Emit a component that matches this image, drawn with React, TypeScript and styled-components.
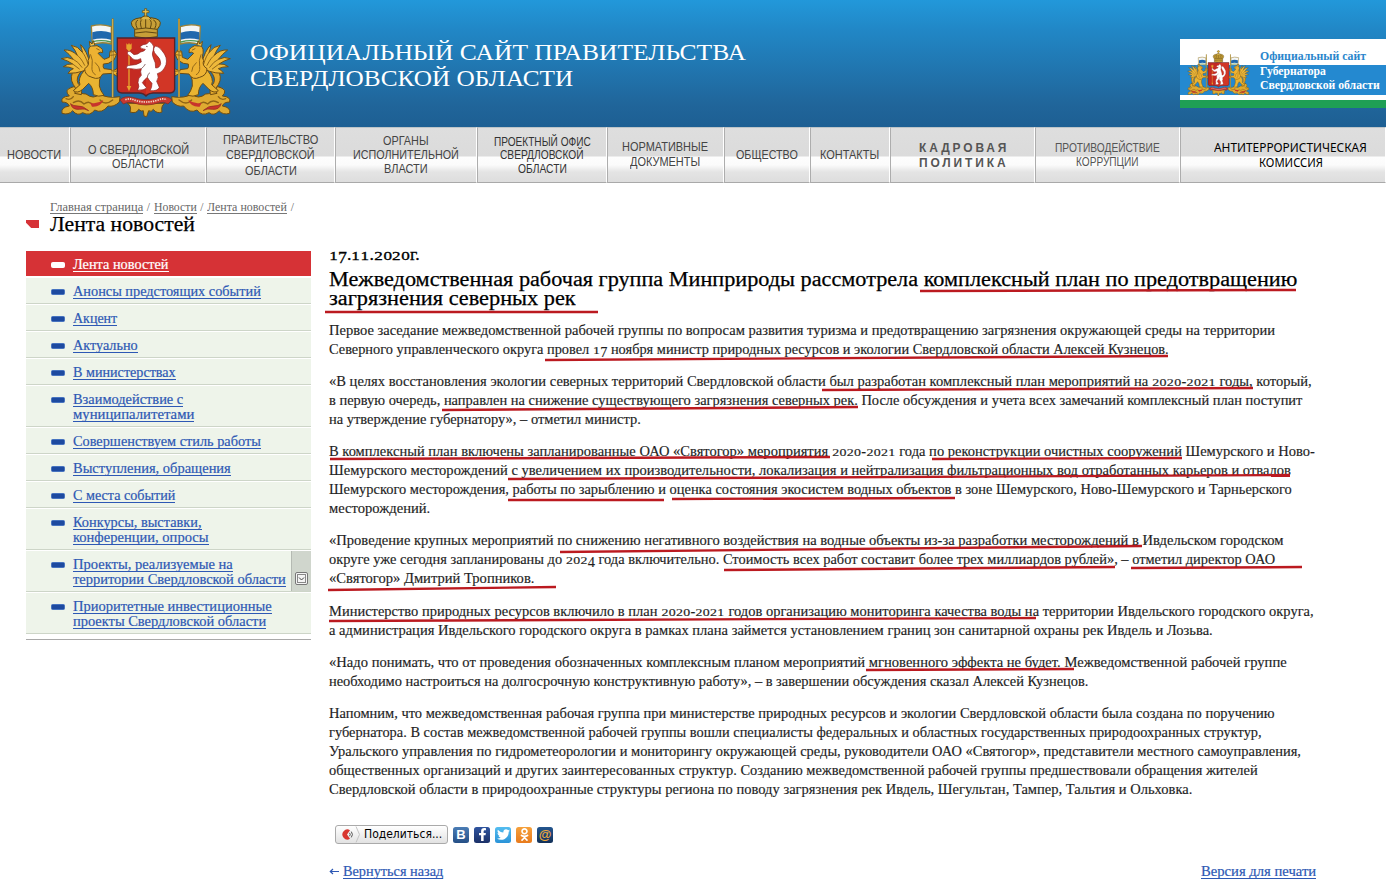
import React, { useLayoutEffect, useRef, useState } from "react";
import styled, { createGlobalStyle } from "styled-components";
import { FaFacebookF, FaTwitter, FaOdnoklassniki } from "react-icons/fa";

const serif = `"Liberation Serif", serif`;
const sans = `"Liberation Sans", sans-serif`;

const Global = createGlobalStyle`
  body { margin: 0; background: #fff; font-family: ${serif}; color: #222; }
  * { box-sizing: border-box; }
`;

/* ---------- text stretched to a measure ---------- */

const FitBox = styled.span<{ $w: number }>`
  display: inline-block;
  width: ${(p) => p.$w}px;
  white-space: nowrap;
  vertical-align: top;
  text-align: left;
`;
const FitInner = styled.span`
  display: inline-block;
  transform-origin: 0 50%;
  vertical-align: top;
`;
const SmallDigit = styled.span`
  font-size: 0.77em;
  line-height: 0;
  display: inline-block;
  transform: scaleX(1.25);
  margin: 0 0.08em;
`;
const LowDigit = styled.span`
  line-height: 0;
  vertical-align: -0.2em;
`;

function oldStyle(text: string) {
  return text.split(/(\d)/).map((c, i) => {
    if (/^[012]$/.test(c)) return <SmallDigit key={i}>{c}</SmallDigit>;
    if (/^[34579]$/.test(c)) return <LowDigit key={i}>{c}</LowDigit>;
    return c;
  });
}

function Fit({ w, children }: { w: number; children: string }) {
  const ref = useRef<HTMLSpanElement>(null);
  const [k, setK] = useState(1);
  useLayoutEffect(() => {
    if (ref.current) setK(w / ref.current.offsetWidth);
  }, [w, children]);
  return (
    <FitBox $w={w}>
      <FitInner ref={ref} style={{ transform: `scaleX(${k})` }}>
        {oldStyle(children)}
      </FitInner>
    </FitBox>
  );
}

/* ---------- header ---------- */

const Header = styled.header`
  height: 127px;
  display: flex;
  justify-content: space-between;
  background: linear-gradient(#2298da 0, #2187c6 30px, #20659a 105px, #1d5f93 127px);
`;
const Brand = styled.div`
  display: flex;
  padding-left: 40px;
`;
const SiteName = styled.h1`
  margin: 0;
  padding-top: 39px;
  margin-left: -10px;
  font-weight: 400;
  font-size: 24px;
  line-height: 26px;
  color: #fff;
  display: flex;
  flex-direction: column;
`;
const Banner = styled.a`
  width: 206px;
  height: 69px;
  margin-top: 39px;
  display: flex;
  padding: 11px 0 0 7px;
  background: linear-gradient(#fff 26px, #2489d0 26px, #2489d0 56px, #fff 56px, #fff 61px, #1f9f55 61px);
`;
const BannerText = styled.div`
  display: flex;
  flex-direction: column;
  padding-left: 10px;
  margin-top: -1px;
  font-weight: 700;
  font-size: 12px;
  line-height: 14.5px;
  color: #fff;
`;
const BannerTop = styled.span`
  color: #2a86cc;
`;

function Griffin() {
  return (
    <g stroke="#6f4d12" strokeWidth="3" strokeLinejoin="round" strokeLinecap="round">
      {/* flag */}
      <path d="M154 78 Q185 70 214 80 L214 132 Q185 124 157 133 Z" fill="#f4f6f6" stroke="#9c8136" strokeWidth="4" />
      <path d="M157 97 Q185 89 213 98 L213 119 Q185 112 157 119 Z" fill="#2068ad" stroke="none" />
      <path d="M158 125 Q185 118 212 126" fill="none" stroke="#479653" strokeWidth="4" />
      {/* acanthus base */}
      <path
        d="M95 262 Q70 270 88 288 Q62 290 66 306 Q84 306 88 318 Q62 322 66 340 Q86 346 98 332 Q112 350 128 338 Q150 350 164 330 Q186 342 204 318 Q222 322 238 306 L240 290 Q200 296 180 282 Q160 300 138 282 Q120 282 112 268 Q110 256 95 262 Z"
        fill="#dfaa31"
      />
      <path d="M100 308 Q118 296 132 312 Q148 300 160 316 M180 300 Q196 318 218 300 M78 296 Q92 302 100 290" fill="none" stroke="#8e6417" strokeWidth="4" />
      <path d="M92 312 Q96 330 118 328 Q134 324 146 332 Q128 316 114 318 Q100 318 92 312 Z" fill="#c8342c" stroke="#8b2a1e" strokeWidth="2" />
      <path d="M150 308 Q170 314 190 300 Q182 322 156 320 Z" fill="#c8342c" stroke="none" />
      {/* hind legs and tail */}
      <path d="M104 204 Q86 232 100 254 Q112 268 104 280 L124 284 Q128 262 114 250 Q106 232 124 214 Z" fill="#e3a82b" />
      <path d="M132 212 Q112 236 120 254 L100 272 Q112 282 128 268 L146 250 Q160 262 160 284 Q176 292 192 286 Q182 274 178 258 Q176 240 184 222 Z" fill="#eab431" />
      {/* wing */}
      <path
        d="M152 196 Q140 150 122 134 Q124 146 128 158 Q114 138 94 136 Q106 150 112 166 Q94 148 72 150 Q88 162 100 178 Q82 168 64 176 Q84 182 98 192 Q82 190 70 200 Q88 200 100 206 Q90 210 84 220 Q110 220 126 214 Q142 212 152 196 Z"
        fill="#eeb93b"
      />
      <path d="M144 192 Q136 166 128 158 M134 196 Q122 172 112 166 M126 202 Q114 184 100 178 M118 207 L98 192" fill="none" stroke="#936819" />
      {/* body and head */}
      <path
        d="M146 148 Q148 136 160 138 Q172 134 180 142 Q190 146 188 158 Q180 154 174 160 Q186 172 192 178 L208 172 L210 154 L222 150 L230 162 L222 180 Q204 194 190 192 Q188 202 192 206 L224 210 L236 202 L232 212 L242 214 L230 220 L234 230 L216 220 L188 222 Q178 242 156 232 Q134 226 134 206 Q150 196 144 182 Q152 172 146 160 Z"
        fill="#edb232"
      />
      <path d="M170 146 L178 150 M152 164 Q160 180 156 200 Q154 218 166 224 M166 188 Q180 200 180 214" fill="none" stroke="#936819" />
      <path d="M150 138 L148 124 L156 132 L160 122 L164 134" fill="#eebf4a" />
      {/* pole */}
      <path d="M218 58 L218 290" stroke="#8a712c" strokeWidth="6" fill="none" />
      <path d="M218 58 L218 290" stroke="#e9c457" strokeWidth="2.5" fill="none" />
      <path d="M212 156 L226 154 M212 166 L228 164 M214 212 L228 214" stroke="#936819" fill="none" />
    </g>
  );
}

function Crest({ width, height, box }: { width: number; height: number; box: string }) {
  return (
    <svg width={width} height={height} viewBox={box} preserveAspectRatio="none">
      <Griffin />
      <g transform="translate(635 0) scale(-1 1)">
        <Griffin />
      </g>
      {/* crown */}
      <g stroke="#5f4711" strokeWidth="3" strokeLinejoin="round">
        <path d="M284 88 Q262 64 288 56 Q304 50 317 56 Q332 50 348 56 Q372 64 352 88 L352 110 Q317 118 284 110 Z" fill="#c7a038" />
        <path d="M292 86 Q282 66 294 60 M304 84 Q298 64 306 58 M317 84 L317 56 M331 84 Q338 64 328 58 M344 86 Q354 66 340 60 M284 88 Q317 80 352 88 M286 99 Q317 92 350 99" fill="none" />
        <path d="M300 58 Q317 36 334 58" fill="#dbb648" />
        <path d="M314 26 H320 V32 H327 V38 H320 V48 H314 V38 H307 V32 H314 Z" fill="#e9c24a" strokeWidth="2" />
      </g>
      {/* shield */}
      <path d="M232 114 H404 V268 Q402 278 390 279 H340 Q324 280 318 288 Q312 280 296 279 H246 Q234 278 232 268 Z" fill="#c42a22" stroke="#54252b" strokeWidth="4" />
      <path d="M318 117 H401 V266 Q400 275 388 276 H338 L318 282 Z" fill="#d23626" />
      {/* arrow */}
      <path d="M267 150 V262" stroke="#e8a32e" strokeWidth="4" />
      <path d="M259 130 L264 134 L267 128 L270 134 L275 130 V146 L267 154 L259 146 Z M267 274 L260 258 H274 Z" fill="#e8a32e" />
      {/* sable */}
      <path
        d="M300 140 Q308 132 320 132 L328 124 L335 129 Q344 138 340 150 Q334 162 340 174 Q348 188 347 204 Q360 204 362 190 Q362 176 350 166 Q334 150 346 138 Q356 138 366 152 Q384 172 378 194 Q370 216 352 221 Q358 232 350 244 L358 262 Q354 274 330 272 Q336 264 336 250 Q326 240 322 232 Q312 240 307 248 L320 264 Q312 272 292 270 Q300 260 294 248 Q294 234 304 226 Q300 214 304 206 Q288 210 274 206 L260 206 Q258 196 270 196 Q290 196 304 186 L302 176 Q282 186 272 170 L262 162 Q260 152 270 154 L282 164 Q294 164 302 156 Q314 154 316 148 Q304 148 300 140 Z"
        fill="#fff"
        stroke="#8c211f"
        strokeWidth="2"
      />
      <path d="M304 206 Q312 200 316 192 M322 232 Q322 222 330 218 M318 139 L323 140" fill="none" stroke="#5b2a2a" strokeWidth="2" />
      {/* ribbon and pendant leaves */}
      <path d="M262 310 Q276 318 270 336 Q290 342 296 328 Q304 336 310 332 L312 348 L320 350 L326 332 Q334 338 340 328 Q350 342 366 336 Q362 318 374 310 Z" fill="#dfaa31" stroke="#6f4d12" strokeWidth="3" />
      <path d="M240 300 Q252 286 278 292 Q318 306 358 292 Q384 286 396 300 L384 312 Q372 304 358 308 Q318 322 278 308 Q264 304 250 312 Z" fill="#c8382f" stroke="#7d2a1e" strokeWidth="2" />
      <path d="M256 299 Q270 294 282 300 Q318 312 354 300 Q368 294 380 299" fill="none" stroke="#f3d9c8" strokeWidth="5" strokeDasharray="4 3" />
    </svg>
  );
}

/* ---------- navigation ---------- */

const Nav = styled.nav`
  display: grid;
  grid-template-columns: 70px 136px 129px 142px 130px 117px 86px 80px 145px 145px 206px;
  height: 56px;
`;
const NavItem = styled.a<{ $lh: number; $top?: number; $left?: number; $color?: string; $bold?: boolean; $first?: boolean; $thin?: boolean }>`
  display: flex;
  flex-direction: column;
  align-items: center;
  justify-content: center;
  border-left: ${(p) => (p.$first ? 0 : 1)}px solid #adadad;
  border-right: 1px solid #fff;
  border-top: 1px solid #bcc4c8;
  border-bottom: 1px solid #a9a9a9;
  padding-top: ${(p) => Math.max(p.$top ?? 0, 0)}px;
  padding-bottom: ${(p) => Math.max(-(p.$top ?? 0), 0)}px;
  padding-left: ${(p) => Math.max(p.$left ?? 0, 0)}px;
  padding-right: ${(p) => Math.max(-(p.$left ?? 0), 0)}px;
  font-family: ${(p) => (p.$thin ? `"Noto Sans", sans-serif` : sans)};
  font-size: ${(p) => (p.$bold || p.$thin ? 12.5 : 13)}px;
  font-weight: ${(p) => (p.$bold ? 700 : 400)};
  letter-spacing: ${(p) => (p.$bold ? 3 : 0)}px;
  line-height: ${(p) => p.$lh}px;
  color: ${(p) => p.$color ?? "#444"};
  background: linear-gradient(#dedede 0, #dbdbdb 28px, #fdfdfd 29px, #fbfbfb 37px, #e4e4e4 44px, #dcdcdc 56px);
`;

type NavDef = {
  lines: [string, number][];
  lh: number;
  top?: number;
  left?: number;
  color?: string;
  bold?: boolean;
  thin?: boolean;
};
const navItems: NavDef[] = [
  { lines: [["НОВОСТИ", 54]], lh: 14, left: -2 },
  { lines: [["О СВЕРДЛОВСКОЙ", 101], ["ОБЛАСТИ", 52]], lh: 14, top: 3 },
  { lines: [["ПРАВИТЕЛЬСТВО", 95], ["СВЕРДЛОВСКОЙ", 89], ["ОБЛАСТИ", 52]], lh: 15.5 },
  { lines: [["ОРГАНЫ", 46], ["ИСПОЛНИТЕЛЬНОЙ", 106], ["ВЛАСТИ", 44]], lh: 14 },
  { lines: [["ПРОЕКТНЫЙ ОФИС", 97], ["СВЕРДЛОВСКОЙ", 84], ["ОБЛАСТИ", 49]], lh: 13.2, color: "#333" },
  { lines: [["НОРМАТИВНЫЕ", 86], ["ДОКУМЕНТЫ", 70]], lh: 15, left: -2, top: -2 },
  { lines: [["ОБЩЕСТВО", 62]], lh: 14, top: -1 },
  { lines: [["КОНТАКТЫ", 59]], lh: 14, left: -1 },
  { lines: [["КАДРОВАЯ", 90], ["ПОЛИТИКА", 89]], lh: 15, bold: true, color: "#555", left: 2, top: 1 },
  { lines: [["ПРОТИВОДЕЙСТВИЕ", 105], ["КОРРУПЦИИ", 63]], lh: 14.5, color: "#555" },
  { lines: [["АНТИТЕРРОРИСТИЧЕСКАЯ", 153], ["КОМИССИЯ", 64]], lh: 15, color: "#000", left: 15, thin: true },
];

/* ---------- page body ---------- */

const Top = styled.div`
  padding: 18px 0 0 26px;
`;
const Crumbs = styled.div`
  display: flex;
  padding-left: 24px;
  height: 13px;
  font-size: 11.5px;
  line-height: 13px;
  color: #666;
`;
const Crumb = styled.a`
  height: 13px;
  border-bottom: 1px solid #777;
`;
const Slash = styled.span`
  width: 10.5px;
  text-align: center;
`;
const PageTitle = styled.div`
  display: flex;
  align-items: center;
  height: 20px;
  font-size: 20.5px;
  line-height: 20px;
  color: #000;
  gap: 11px;
  -webkit-text-stroke: 0.25px currentColor;
`;
const Tag = styled.span`
  width: 13px;
  height: 8px;
  background: #d63237;
  clip-path: polygon(0 0, 100% 0, 100% 100%, 40% 100%, 0 35%);
`;
const Columns = styled.main`
  display: flex;
  padding: 12px 0 0 26px;
  gap: 18px;
`;
const Side = styled.aside`
  width: 285px;
  margin-top: 5px;
`;
const SideList = styled.div`
  border-bottom: 1px solid #a9a9a9;
  padding-bottom: 5px;
`;
const SideRow = styled.div<{ $active?: boolean }>`
  display: flex;
  border-top: ${(p) => (p.$active ? 0 : 1)}px solid #fff;
  border-bottom: 1px solid ${(p) => (p.$active ? "#fff" : "#cdd5c8")};
  background: ${(p) => (p.$active ? "#d63236" : "#eef4ea")};
  color: ${(p) => (p.$active ? "#fff" : "#2d58b4")};
  padding-left: 25px;
`;
const Bullet = styled.span<{ $active?: boolean }>`
  width: 14px;
  height: 6px;
  margin: 11px 8px 0 0;
  border-radius: 1.5px;
  border: 1px solid ${(p) => (p.$active ? "#fff" : "#4673c0")};
  background: ${(p) => (p.$active ? "#fff" : "#1d4aa0")};
`;
const SideText = styled.span`
  display: flex;
  flex-direction: column;
  align-items: flex-start;
  padding: 6px 0 4px;
  flex: 1;
  -webkit-text-stroke: 0.2px currentColor;
`;
const SideLine = styled.a`
  display: block;
  height: 15px;
  font-size: 14px;
  line-height: 15px;
  border-bottom: 1px solid currentColor;
`;
const Expander = styled.span`
  width: 20px;
  border-left: 1px solid #b5bab3;
  background: #d0d6cd;
  display: flex;
  justify-content: center;
  align-items: flex-end;
  padding-bottom: 6px;
`;

const sideItems: { lines: [string, number][]; expand?: boolean }[] = [
  { lines: [["Лента новостей", 96]] },
  { lines: [["Анонсы предстоящих событий", 188]] },
  { lines: [["Акцент", 44]] },
  { lines: [["Актуально", 65]] },
  { lines: [["В министерствах", 103]] },
  { lines: [["Взаимодействие с", 110], ["муниципалитетами", 121]] },
  { lines: [["Совершенствуем стиль работы", 188]] },
  { lines: [["Выступления, обращения", 158]] },
  { lines: [["С места событий", 102]] },
  { lines: [["Конкурсы, выставки,", 129], ["конференции, опросы", 136]] },
  { lines: [["Проекты, реализуемые на", 160], ["территории Свердловской области", 213]], expand: true },
  { lines: [["Приоритетные инвестиционные", 199], ["проекты Свердловской области", 193]] },
];

const Article = styled.article`
  position: relative;
  width: 990px;
  color: #1e1e1e;
`;
const DateLine = styled.div`
  height: 18px;
  font-size: 17px;
  line-height: 18px;
  color: #000;
  -webkit-text-stroke: 0.3px currentColor;
`;
const Headline = styled.h2`
  margin: 6px 0 12.5px;
  font-weight: 400;
  font-size: 20.5px;
  line-height: 19px;
  color: #000;
  display: flex;
  flex-direction: column;
  -webkit-text-stroke: 0.25px currentColor;
`;
const Para = styled.p`
  margin: 0 0 13.3px;
  display: flex;
  flex-direction: column;
  font-size: 14px;
  line-height: 19px;
  -webkit-text-stroke: 0.15px currentColor;
`;
const Marks = styled.svg`
  position: absolute;
  left: -9px;
  top: -6px;
  overflow: visible;
  pointer-events: none;
`;

const paragraphs: [string, number][][] = [
  [
    ["Первое заседание межведомственной рабочей группы по вопросам развития туризма и предотвращению загрязнения окружающей среды на территории", 946],
    ["Северного управленческого округа провел 17 ноября министр природных ресурсов и экологии Свердловской области Алексей Кузнецов.", 840],
  ],
  [
    ["«В целях восстановления экологии северных территорий Свердловской области был разработан комплексный план мероприятий на 2020-2021 годы, который,", 983],
    ["в первую очередь, направлен на снижение существующего загрязнения северных рек. После обсуждения и учета всех замечаний комплексный план поступит", 973],
    ["на утверждение губернатору», – отметил министр.", 312],
  ],
  [
    ["В комплексный план включены запланированные ОАО «Святогор» мероприятия 2020-2021 года по реконструкции очистных сооружений Шемурского и Ново-", 986],
    ["Шемурского месторождений с увеличением их производительности, локализация и нейтрализация фильтрационных вод отработанных карьеров и отвалов", 962],
    ["Шемурского месторождения, работы по зарыблению и оценка состояния экосистем водных объектов в зоне Шемурского, Ново-Шемурского и Тарньерского", 963],
    ["месторождений.", 101],
  ],
  [
    ["«Проведение крупных мероприятий по снижению негативного воздействия на водные объекты из-за разработки месторождений в Ивдельском городском", 955],
    ["округе уже сегодня запланированы до 2024 года включительно. Стоимость всех работ составит более трех миллиардов рублей», – отметил директор ОАО", 946],
    ["«Святогор» Дмитрий Тропников.", 205],
  ],
  [
    ["Министерство природных ресурсов включило в план 2020-2021 годов организацию мониторинга качества воды на территории Ивдельского городского округа,", 985],
    ["а администрация Ивдельского городского округа в рамках плана займется установлением границ зон санитарной охраны рек Ивдель и Лозьва.", 884],
  ],
  [
    ["«Надо понимать, что от проведения обозначенных комплексным планом мероприятий мгновенного эффекта не будет. Межведомственной рабочей группе", 958],
    ["необходимо настроиться на долгосрочную конструктивную работу», – в завершении обсуждения сказал Алексей Кузнецов.", 759],
  ],
  [
    ["Напомним, что межведомственная рабочая группа при министерстве природных ресурсов и экологии Свердловской области была создана по поручению", 946],
    ["губернатора. В состав межведомственной рабочей группы вошли специалисты федеральных и областных государственных природоохранных структур,", 933],
    ["Уральского управления по гидрометеорологии и мониторингу окружающей среды, руководители ОАО «Святогор», представители местного самоуправления,", 972],
    ["общественных организаций и других заинтересованных структур. Созданию межведомственной рабочей группы предшествовали обращения жителей", 929],
    ["Свердловской области в природоохранные структуры региона по поводу загрязнения рек Ивдель, Шегультан, Тампер, Тальтия и Ольховка.", 863],
  ],
];

/* red pen strokes: x1, y1, x2, y2 */
const strokes: number[][] = [
  [600, 51, 976, 50],
  [5, 72, 278, 72],
  [225, 120, 848, 116],
  [502, 150, 933, 148],
  [122, 170, 538, 167],
  [10, 219, 510, 217],
  [612, 219, 862, 218],
  [188, 239, 970, 235],
  [188, 260, 344, 260],
  [352, 259, 635, 258],
  [240, 312, 822, 306],
  [404, 330, 795, 327],
  [811, 328, 982, 327],
  [8, 350, 236, 347],
  [9, 381, 716, 378],
  [546, 430, 754, 429],
];

const Share = styled.div`
  display: flex;
  align-items: center;
  gap: 5px;
  height: 19px;
  margin: 26px 0 0 6px;
`;
const ShareButton = styled.button`
  width: 113px;
  height: 19px;
  display: flex;
  align-items: center;
  padding: 0 0 0 5px;
  margin: 0;
  border: 1px solid #aaa;
  border-radius: 3px;
  background: linear-gradient(#fff, #e2e2e2);
  font: 11.5px/17px "DejaVu Sans", sans-serif;
  color: #000;
  gap: 2px;
`;
const Social = styled.a<{ $bg: string; $color?: string }>`
  width: 16px;
  height: 16px;
  border-radius: 2.5px;
  background: ${(p) => p.$bg};
  display: flex;
  align-items: center;
  justify-content: center;
  color: ${(p) => p.$color ?? "#fff"};
  font: 700 13px/16px ${sans};
`;
const Footer = styled.div`
  display: flex;
  justify-content: space-between;
  width: 987px;
  margin-top: 20px;
  font-size: 14px;
  line-height: 15px;
  color: #2d58b4;
  -webkit-text-stroke: 0.2px currentColor;
`;
const Back = styled.div`
  display: flex;
  align-items: flex-start;
  gap: 3px;
`;
const FootLink = styled.a`
  height: 15px;
  border-bottom: 1px solid #2d58b4;
`;

export default function App() {
  return (
    <>
      <Global />
      <Header>
        <Brand>
          <Crest width={220} height={127} box="0 0 660 381" />
          <SiteName>
            <Fit w={496}>ОФИЦИАЛЬНЫЙ САЙТ ПРАВИТЕЛЬСТВА</Fit>
            <Fit w={323}>СВЕРДЛОВСКОЙ ОБЛАСТИ</Fit>
          </SiteName>
        </Brand>
        <Banner>
          <Crest width={63} height={46} box="58 24 520 328" />
          <BannerText>
            <BannerTop>
              <Fit w={106}>Официальный сайт</Fit>
            </BannerTop>
            <Fit w={66}>Губернатора</Fit>
            <Fit w={120}>Свердловской области</Fit>
          </BannerText>
        </Banner>
      </Header>
      <Nav>
        {navItems.map((n, i) => (
          <NavItem key={i} $first={i === 0} $lh={n.lh} $top={n.top} $left={n.left} $color={n.color} $bold={n.bold} $thin={n.thin}>
            {n.lines.map(([t, w]) => (
              <Fit key={t} w={w}>
                {t}
              </Fit>
            ))}
          </NavItem>
        ))}
      </Nav>
      <Top>
        <Crumbs>
          <Crumb><Fit w={93}>Главная страница</Fit></Crumb>
          <Slash>/</Slash>
          <Crumb><Fit w={43}>Новости</Fit></Crumb>
          <Slash>/</Slash>
          <Crumb><Fit w={80}>Лента новостей</Fit></Crumb>
          <Slash>/</Slash>
        </Crumbs>
        <PageTitle>
          <Tag />
          <Fit w={145}>Лента новостей</Fit>
        </PageTitle>
      </Top>
      <Columns>
        <Side>
          <SideList>
            {sideItems.map((item, i) => (
              <SideRow key={i} $active={i === 0}>
                <Bullet $active={i === 0} />
                <SideText>
                  {item.lines.map(([t, w]) => (
                    <SideLine key={t}>
                      <Fit w={w}>{t}</Fit>
                    </SideLine>
                  ))}
                </SideText>
                {item.expand && (
                  <Expander>
                    <svg width="13" height="13" viewBox="0 0 13 13" fill="none" stroke="#777">
                      <rect x="0.5" y="0.5" width="12" height="12" rx="1.5" fill="#f4f4f4" />
                      <rect x="2.5" y="2.5" width="8" height="8" stroke="#888" />
                      <path d="M4 5.5 L6.5 8 L9 5.5" stroke="#444" />
                    </svg>
                  </Expander>
                )}
              </SideRow>
            ))}
          </SideList>
        </Side>
        <Article>
          <DateLine>
            <Fit w={91}>17.11.2020г.</Fit>
          </DateLine>
          <Headline>
            <Fit w={968}>Межведомственная рабочая группа Минприроды рассмотрела комплексный план по предотвращению</Fit>
            <Fit w={247}>загрязнения северных рек</Fit>
          </Headline>
          {paragraphs.map((lines, i) => (
            <Para key={i}>
              {lines.map(([t, w]) => (
                <Fit key={t} w={w}>
                  {t}
                </Fit>
              ))}
            </Para>
          ))}
          <Share>
            <ShareButton>
              <svg width="21" height="17" viewBox="0 0 21 17" fill="none">
                <path d="M9 4.2 A5 5 0 1 0 9 12.8 L6 8.5 Z" fill="#d8362f" />
                <path d="M8.5 6.8 Q10 8.5 8.5 10.2 M10.3 5.6 Q12.6 8.5 10.3 11.4" stroke="#555" />
                <path d="M15 0.5 L18.5 8.5 L15 16.5" stroke="#c4c4c4" />
              </svg>
              <Fit w={78}>Поделиться...</Fit>
            </ShareButton>
            <Social $bg="linear-gradient(#4b7db5, #254f86)">B</Social>
            <Social $bg="linear-gradient(#2f55a0, #1b3168)">
              <FaFacebookF size={13} />
            </Social>
            <Social $bg="linear-gradient(#54bdf0, #2a93d8)">
              <FaTwitter size={13} />
            </Social>
            <Social $bg="linear-gradient(#f6a13c, #e87a1c)">
              <FaOdnoklassniki size={13} />
            </Social>
            <Social $bg="linear-gradient(#24568f, #123058)" $color="#efa93a">@</Social>
          </Share>
          <Footer>
            <Back>
              <svg width="11" height="14" viewBox="0 0 11 14" fill="none" stroke="#2d58b4" strokeWidth="1.2">
                <path d="M10 7.5 H1.5 M4 5 L1.3 7.5 L4 10" />
              </svg>
              <FootLink>
                <Fit w={100}>Вернуться назад</Fit>
              </FootLink>
            </Back>
            <FootLink>
              <Fit w={115}>Версия для печати</Fit>
            </FootLink>
          </Footer>
          <Marks width="1000" height="450" stroke="#bb1a20" strokeWidth="2.4">
            {strokes.map(([x1, y1, x2, y2], i) => (
              <line key={i} x1={x1} y1={y1} x2={x2} y2={y2} />
            ))}
          </Marks>
        </Article>
      </Columns>
    </>
  );
}
